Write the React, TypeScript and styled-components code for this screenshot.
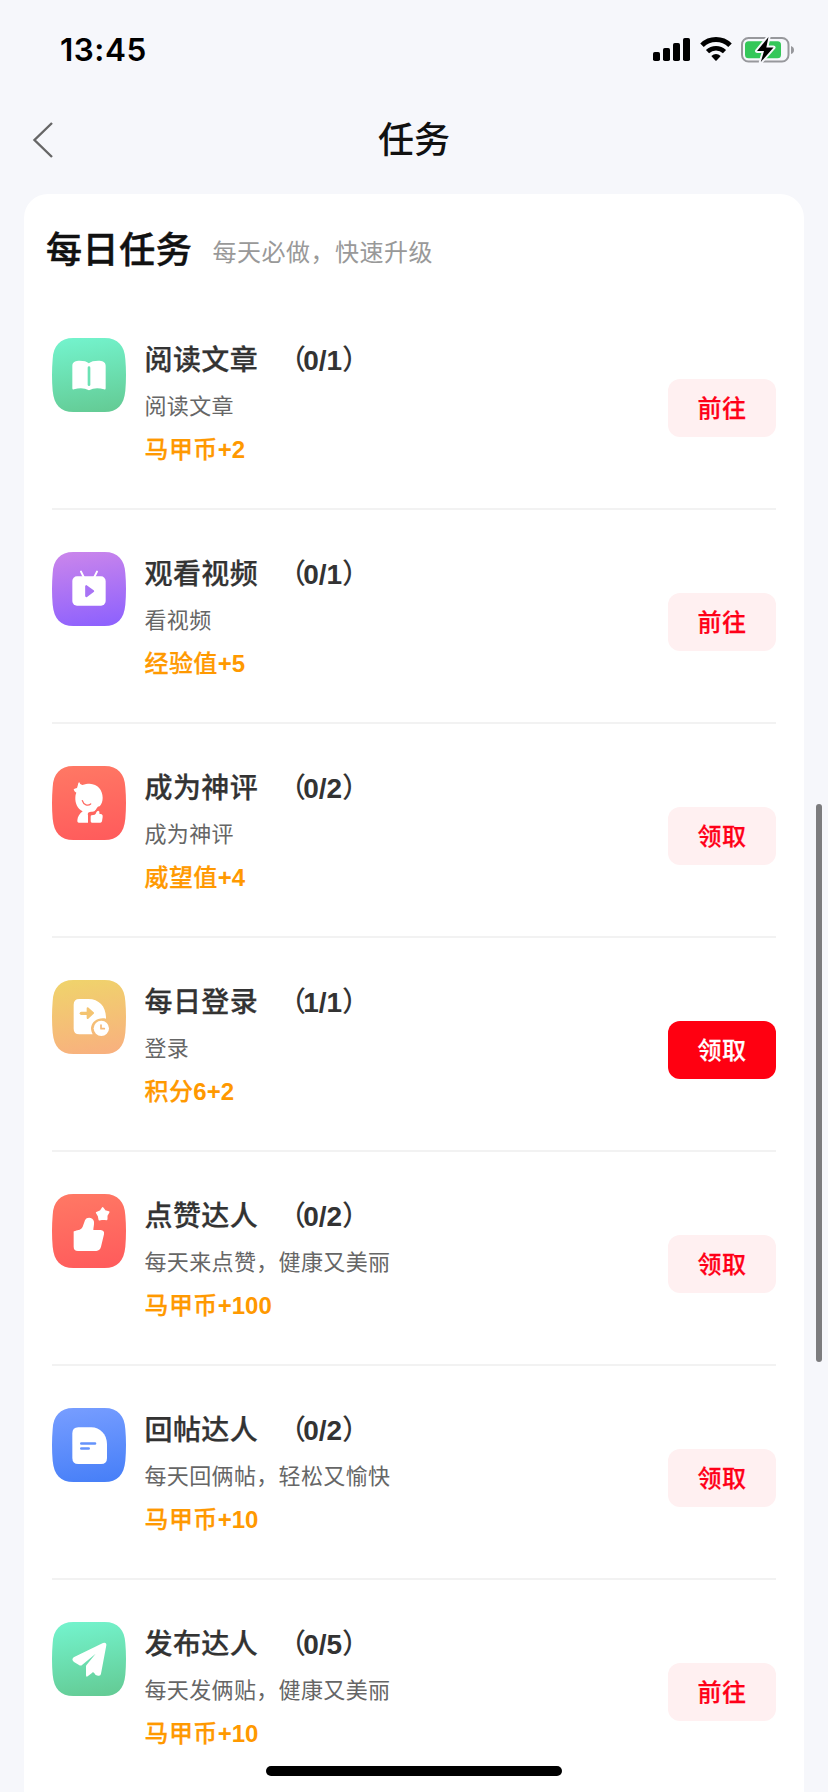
import React from 'react';
import styled, { createGlobalStyle, css } from 'styled-components';

const GlobalStyle = createGlobalStyle`
  * { box-sizing: border-box; }
  body {
    margin: 0;
    background: #f6f7fb;
    font-family: 'Liberation Sans', 'Noto Sans CJK SC', sans-serif;
  }
`;

const Screen = styled.main`
  position: relative;
  display: flex;
  flex-direction: column;
  width: 828px;
  height: 1792px;
  overflow: hidden;
  background: #f6f7fb;
`;

const StatusBar = styled.header`
  display: flex;
  flex: none;
  justify-content: space-between;
  align-items: center;
  height: 88px;
  padding: 12px 33px 0 60px;
`;

const Time = styled.span`
  font: 600 31.5px/38px Inter, sans-serif;
  letter-spacing: 0.5px;
  color: #000;
`;

const StatusIcons = styled.div`
  display: flex;
  align-items: center;
  gap: 9px;
  height: 28px;
`;

const NavBar = styled.nav`
  display: grid;
  flex: none;
  grid-template-columns: 60px 1fr 60px;
  align-items: center;
  height: 106px;
  padding: 0 24px 2px;
`;

const BackButton = styled.button`
  display: flex;
  padding: 0 0 0 8px;
  border: 0;
  background: none;
`;

const PageTitle = styled.h1`
  margin: 0;
  padding-top: 2px;
  font-size: 36px;
  font-weight: 500;
  line-height: 44px;
  text-align: center;
  color: #111;
`;

const Card = styled.section`
  flex: none;
  margin: 0 24px;
  border-radius: 24px 24px 0 0;
  background: #fff;
`;

const CardHeader = styled.div`
  display: flex;
  align-items: center;
  gap: 20px;
  height: 102px;
  padding: 11px 22px 0;
`;

const CardTitle = styled.h2`
  margin: 0;
  font-size: 36px;
  font-weight: 500;
  line-height: 44px;
  letter-spacing: 0.6px;
  color: #111;
  -webkit-text-stroke: 0.5px #111;
`;

const CardHint = styled.span`
  padding-top: 4px;
  font-size: 24px;
  line-height: 32px;
  letter-spacing: 0.5px;
  color: #999;
`;

const TaskList = styled.ul`
  margin: 0;
  padding: 0 28px;
  list-style: none;
`;

const TaskRow = styled.li`
  display: flex;
  align-items: flex-start;
  height: 214px;
  padding-top: 42px;
  border-bottom: 2px solid #f2f2f2;
`;

const TaskIcon = styled.svg`
  flex: none;
  width: 74px;
  height: 74px;
`;

const TaskText = styled.div`
  display: flex;
  flex: 1;
  flex-direction: column;
  margin: 1px 0 0 18.5px;
`;

const TaskName = styled.div`
  display: flex;
  gap: 20px;
  height: 44px;
  font-size: 28px;
  font-weight: 500;
  line-height: 44px;
  color: #333;
`;

const Cjk = styled.span`
  font-weight: 500;
  letter-spacing: 0.4px;
  -webkit-text-stroke: 0.25px currentColor;
`;

const Count = styled.span`
  font-weight: 700;
`;

const Paren = styled.span`
  margin-right: -3px;
  font-weight: 500;
`;

const TaskDesc = styled.div`
  height: 48px;
  font-size: 22px;
  line-height: 48px;
  letter-spacing: 0.35px;
  color: #666;
`;

const Reward = styled.div`
  height: 40px;
  font-size: 24px;
  font-weight: 700;
  line-height: 38px;
  color: #ff9900;
`;

const ActionButton = styled.button<{ $ready?: boolean }>`
  width: 108px;
  height: 58px;
  margin-top: 41px;
  padding: 1px 0 0;
  border: 0;
  border-radius: 12px;
  font: 500 24px/57px 'Liberation Sans', 'Noto Sans CJK SC', sans-serif;
  letter-spacing: 0.5px;
  -webkit-text-stroke: 0.25px currentColor;
  ${(p) =>
    p.$ready
      ? css`
          background: #ff0011;
          color: #fff;
        `
      : css`
          background: #fff0f1;
          color: #ff0018;
        `}
`;

const ScrollThumb = styled.div`
  position: absolute;
  top: 804px;
  right: 6px;
  width: 6px;
  height: 558px;
  border-radius: 3px;
  background: #7c7c7e;
`;

const HomeIndicator = styled.div`
  position: absolute;
  bottom: 16px;
  left: 266px;
  width: 296px;
  height: 10px;
  border-radius: 5px;
  background: #000;
`;

type Kind = 'book' | 'video' | 'person' | 'login' | 'like' | 'reply' | 'publish';

const GRADIENTS: Record<Kind, [string, string]> = {
  book: ['#73f2cb', '#64cc96'],
  video: ['#c884ec', '#8f62fd'],
  person: ['#ff7764', '#ff5c5c'],
  login: ['#f0d26c', '#f8b17e'],
  like: ['#ff7764', '#ff5c5c'],
  reply: ['#759cff', '#4880f8'],
  publish: ['#73f2cb', '#64cc96'],
};

const GLYPHS: Record<Kind, React.ReactNode> = {
  book: (
    <>
      <path d="M61 83C61 71 72 68 83 68C95 68 105 70 110.5 76C116 70 127 68 139 68C150 68 161 71 161 83V151Q161 156 156 154C140 149 125 149 111 157C97 149 82 149 66 154Q61 156 61 151Z" />
      <path d="M111 89V140" stroke="#6be2b4" strokeWidth="8" strokeLinecap="round" />
    </>
  ),
  video: (
    <>
      <rect x="61" y="73" width="100" height="88" rx="14" />
      <path d="M87 59L95 75M135 59L127 75" stroke="#fff" strokeWidth="6" strokeLinecap="round" />
      <path d="M103 103V132L123 117.500Z" fill="#a873f5" stroke="#a873f5" strokeWidth="7" strokeLinejoin="round" />
    </>
  ),
  person: (
    <>
      <path d="M82 49Q84 57 91 57C99 54 106 53 113 53C137 54 152 72 152 95C152 106 149 114 143 121C135 120 134 131 128 135Q124 138 117 137C107 138 107 142 108 148V170H80Q75 170 76 163C77 152 83 143 92 136C77 129 69 112 70 94Q70 86 73 80Q66 77 65 70Q69 67 75 66Q78 57 79 51Q81 48 82 49Z" />
      <path d="M91 104C95 118 108 120 116 114" fill="none" stroke="#ff6a62" strokeWidth="4" strokeLinecap="round" />
      <path d="M119 148L128 146Q132 144 133 139Q135 134 139 134Q144 135 142 143L149 145Q153 147 152 153L150 166Q149 170 145 170H120Q116 170 116 166V152Q116 148 119 148Z" />
    </>
  ),
  login: (
    <>
      <path d="M82 57H109C141 57 161 79 162 111V116C139 111 119 124 117 144C117 151 119 157 122 163H82Q65 163 65 146V74Q65 57 82 57Z" />
      <path d="M88 100H108" stroke="#f4c471" strokeWidth="10" strokeLinecap="round" />
      <path d="M107 85L123 99L107 114Z" fill="#f4c471" stroke="#f4c471" strokeWidth="6" strokeLinejoin="round" />
      <circle cx="148" cy="145" r="23" />
      <path d="M147 135V146H157" fill="none" stroke="#f6b978" strokeWidth="5" strokeLinecap="round" strokeLinejoin="round" />
    </>
  ),
  like: (
    <>
      <path d="M66 112C75 107 85 111 92 98L99 79C104 67 124 70 126 83C127 91 124 100 124 108H146Q158 109 156 121L147 158Q144 169 133 171H78Q65 171 65 158V116Q64 113 66 112Z" />
      <path d="M152 42L159 51L170 54L164 65V76L153 75L142 77L140 66L134 56L146 51Z" stroke="#fff" strokeWidth="5" strokeLinejoin="round" />
    </>
  ),
  reply: (
    <>
      <path d="M79 58H118C144 58 164 79 165 107V150Q165 168 147 168H79Q61 168 61 150V76Q61 58 79 58Z" />
      <path d="M88 106.500H129M88 121.500H110" stroke="#6493fb" strokeWidth="8" strokeLinecap="round" />
    </>
  ),
  publish: (
    <path d="M153 63Q164 60 163 70L147 155Q146 163 138 161L131 159L126 152Q122 149 119 154L107 163Q102 166 102 159V132Q103 129 106 126L131 95L91 128Q86 133 81 129L66 120Q57 113 65 106Z" />
  ),
};

function TileIcon({ kind }: { kind: Kind }) {
  const [from, to] = GRADIENTS[kind];
  return (
    <TaskIcon viewBox="0 0 222 222" fill="#fff">
      <defs>
        <linearGradient id={`tile-${kind}`} x1="0.42" y1="0" x2="0.58" y2="1">
          <stop offset="0" stopColor={from} />
          <stop offset="1" stopColor={to} />
        </linearGradient>
      </defs>
      <path
        d="M64 0H158C198 0 218 24 220 64Q224 111 220 158C216 201 196 222 158 222H64C26 222 6 201 2 158Q-2 111 2 64C4 24 24 0 64 0Z"
        fill={`url(#tile-${kind})`}
      />
      {GLYPHS[kind]}
    </TaskIcon>
  );
}

function SignalIcon() {
  return (
    <svg width="38" height="28" viewBox="0 0 38 28">
      <rect x="0" y="16" width="7" height="9" rx="1.8" />
      <rect x="10" y="12" width="7" height="13" rx="1.8" />
      <rect x="20" y="7" width="7" height="18" rx="1.8" />
      <rect x="30" y="2" width="7" height="23" rx="1.8" />
    </svg>
  );
}

function WifiIcon() {
  return (
    <svg width="32" height="28" viewBox="0 0 32 28">
      <path d="M2 9.300A20 20 0 0 1 30 9.300" fill="none" stroke="#000" strokeWidth="5" />
      <path d="M7.500 15.600A12.500 12.500 0 0 1 24.500 15.600" fill="none" stroke="#000" strokeWidth="4.600" />
      <path d="M11.300 20Q16 16.200 20.700 20L16.600 24.500Q16 25.100 15.400 24.500Z" />
    </svg>
  );
}

function BatteryIcon() {
  return (
    <svg width="54" height="28" viewBox="0 0 54 28">
      <rect x="1" y="2" width="46.500" height="23.500" rx="6.500" fill="none" stroke="#97989c" strokeWidth="2" />
      <path d="M50 10Q53 11 53 14Q53 17 50 18Z" fill="#97989c" />
      <rect x="4" y="5.300" width="36" height="17" rx="3.500" fill="#34c759" />
      <path
        d="M27.500 1L16 15H23L19.800 26L32.500 11.500H25.300Z"
        fill="#000"
        stroke="#f6f7fb"
        strokeWidth="4"
        strokeLinejoin="round"
        paintOrder="stroke"
      />
    </svg>
  );
}

interface Task {
  kind: Kind;
  name: string;
  count: string;
  desc: string;
  reward: string;
  amount: string;
  action: string;
  ready?: boolean;
}

const TASKS: Task[] = [
  { kind: 'book', name: '阅读文章', count: '0/1', desc: '阅读文章', reward: '马甲币', amount: '+2', action: '前往' },
  { kind: 'video', name: '观看视频', count: '0/1', desc: '看视频', reward: '经验值', amount: '+5', action: '前往' },
  { kind: 'person', name: '成为神评', count: '0/2', desc: '成为神评', reward: '威望值', amount: '+4', action: '领取' },
  { kind: 'login', name: '每日登录', count: '1/1', desc: '登录', reward: '积分', amount: '6+2', action: '领取', ready: true },
  { kind: 'like', name: '点赞达人', count: '0/2', desc: '每天来点赞，健康又美丽', reward: '马甲币', amount: '+100', action: '领取' },
  { kind: 'reply', name: '回帖达人', count: '0/2', desc: '每天回俩帖，轻松又愉快', reward: '马甲币', amount: '+10', action: '领取' },
  { kind: 'publish', name: '发布达人', count: '0/5', desc: '每天发俩贴，健康又美丽', reward: '马甲币', amount: '+10', action: '前往' },
];

export default function App() {
  return (
    <>
      <GlobalStyle />
      <Screen lang="zh-CN">
        <StatusBar>
          <Time>13:45</Time>
          <StatusIcons>
            <SignalIcon />
            <WifiIcon />
            <BatteryIcon />
          </StatusIcons>
        </StatusBar>
        <NavBar>
          <BackButton aria-label="返回">
            <svg width="22" height="38" viewBox="0 0 22 38" fill="none" stroke="#666" strokeWidth="2.400">
              <path d="M20 2L2.500 19L20 36" />
            </svg>
          </BackButton>
          <PageTitle>任务</PageTitle>
        </NavBar>
        <Card>
          <CardHeader>
            <CardTitle>每日任务</CardTitle>
            <CardHint>每天必做，快速升级</CardHint>
          </CardHeader>
          <TaskList>
            {TASKS.map((task) => (
              <TaskRow key={task.kind}>
                <TileIcon kind={task.kind} />
                <TaskText>
                  <TaskName>
                    <Cjk>{task.name}</Cjk>
                    <Count>
                      <Paren>（</Paren>
                      {task.count}
                      <Paren>）</Paren>
                    </Count>
                  </TaskName>
                  <TaskDesc>{task.desc}</TaskDesc>
                  <Reward>
                    <Cjk>{task.reward}</Cjk>
                    {task.amount}
                  </Reward>
                </TaskText>
                <ActionButton $ready={task.ready}>{task.action}</ActionButton>
              </TaskRow>
            ))}
          </TaskList>
        </Card>
        <ScrollThumb />
        <HomeIndicator />
      </Screen>
    </>
  );
}
